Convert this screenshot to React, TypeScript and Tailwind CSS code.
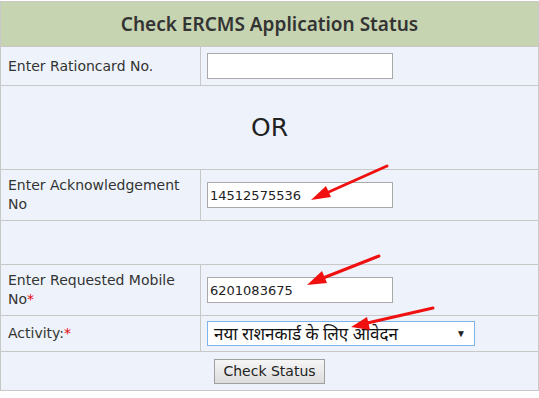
import React from "react";

const font = { fontFamily: "Tahoma, 'DejaVu Sans', Verdana, sans-serif" };

export default function App() {
  const cellL = "border border-[#c8c8c8] px-[7px] text-[14px] text-[#333] align-middle leading-[19px]";
  const cellR = "border border-[#c8c8c8] pl-[6px] align-middle";
  const input = "block w-[186px] h-[26px] border border-[#a9a9a9] bg-white px-[2px] text-[13px] text-[#222] outline-none";
  return (
    <div className="relative w-[539px] h-[398px] bg-white" style={font}>
      <table className="mt-[1px] w-[539px] border-collapse border border-[#c8c8c8] bg-[#eef3fb]">
        <tbody>
          <tr className="h-[45px]">
            <td colSpan={2} className="border border-[#c8c8c8] bg-[#c6d4b1] text-center text-[19px] font-semibold text-[#333]" style={{ fontFamily: "'Noto Sans', 'Open Sans', sans-serif" }}>
              Check ERCMS Application Status
            </td>
          </tr>
          <tr className="h-[39px]">
            <td className={cellL + " w-[200px]"}>Enter Rationcard No.</td>
            <td className={cellR}>
              <input className={input} defaultValue="" />
            </td>
          </tr>
          <tr className="h-[84px]">
            <td colSpan={2} className="border border-[#c8c8c8] text-center text-[25px] text-[#222]">
              OR
            </td>
          </tr>
          <tr className="h-[51px]">
            <td className={cellL}>Enter Acknowledgement<br />No</td>
            <td className={cellR}>
              <input className={input} defaultValue="14512575536" />
            </td>
          </tr>
          <tr className="h-[44px]">
            <td colSpan={2} className="border border-[#c8c8c8]"></td>
          </tr>
          <tr className="h-[51px]">
            <td className={cellL}>
              Enter Requested Mobile<br />No<span className="text-red-600">*</span>
            </td>
            <td className={cellR}>
              <input className={input} defaultValue="6201083675" />
            </td>
          </tr>
          <tr className="h-[36px]">
            <td className={cellL}>
              Activity:<span className="text-red-600">*</span>
            </td>
            <td className={cellR}>
              <div className="flex h-[25px] w-[268px] items-center justify-between border border-[#7eb4ea] bg-white pl-[6px] pr-[8px] text-[17px] text-[#111]" style={{ fontFamily: "'Noto Sans', 'Noto Sans Devanagari', sans-serif" }}>
                <span className="leading-[20px]">नया राशनकार्ड के लिए आवेदन</span>
                <span className="text-[10px] text-[#222]">▼</span>
              </div>
            </td>
          </tr>
          <tr className="h-[39px]">
            <td colSpan={2} className="border border-[#c8c8c8] text-center">
              <button className="h-[25px] w-[111px] border border-[#a0a0a0] bg-gradient-to-b from-[#f6f6f6] to-[#dcdcdc] text-[14px] text-[#222]">
                Check Status
              </button>
            </td>
          </tr>
        </tbody>
      </table>
      <svg className="pointer-events-none absolute left-0 top-0" width="539" height="398">
        <g stroke="#f01010" strokeWidth="3" strokeLinecap="round" fill="#f01010">
          <line x1="387" y1="165" x2="322" y2="194" />
          <polygon points="311,199 326,185 331,196" stroke="none" />
          <line x1="379" y1="255" x2="318" y2="279" />
          <polygon points="307,284 322,270 327,282" stroke="none" />
          <line x1="433" y1="307" x2="363" y2="323" />
          <polygon points="351,326 367,316 370,329" stroke="none" />
        </g>
      </svg>
    </div>
  );
}
